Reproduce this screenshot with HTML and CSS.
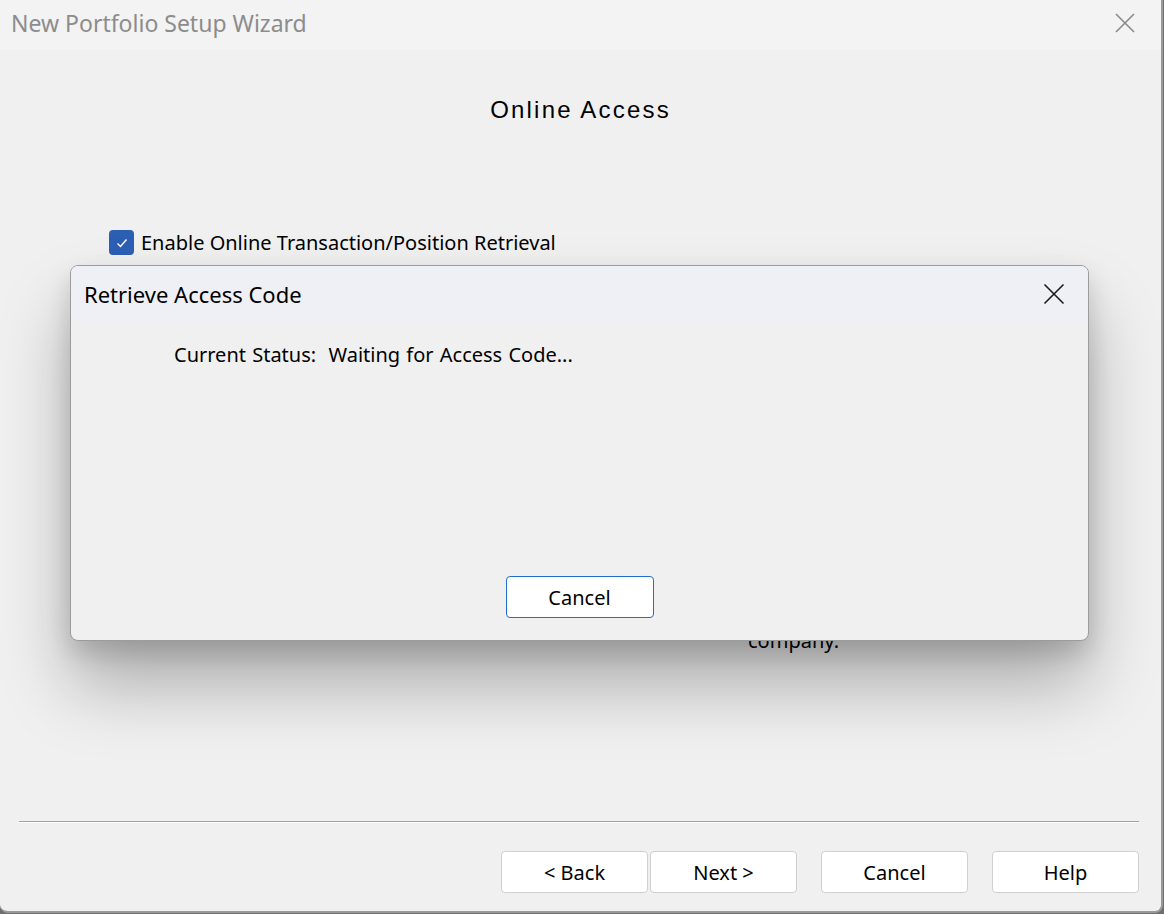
FILE: index.html
```html
<!DOCTYPE html>
<html lang="en">
<head>
    <meta charset="UTF-8">
    <title>New Portfolio Setup Wizard</title>
    <link rel="stylesheet" href="styles.css">
</head>
<body>
    <div class="window">
        <div class="titlebar">
            <span class="title">New Portfolio Setup Wizard</span>
            <svg class="close" width="22" height="22" viewBox="0 0 22 22">
                <path d="M2 2 L20 20 M20 2 L2 20" stroke="#8a8a8a" stroke-width="1.6" fill="none"/>
            </svg>
        </div>

        <div class="content">
            <h2 class="heading">Online Access</h2>
            <label class="check-row">
                <span class="checkbox">
                    <svg width="14" height="14" viewBox="0 0 14 14">
                        <path d="M2.5 7.5 L5.5 10.5 L11.5 3.5" stroke="#fff" stroke-width="1.4" fill="none"/>
                    </svg>
                </span>
                Enable Online Transaction/Position Retrieval
            </label>
            <p class="hidden-text">company.</p>
        </div>

        <div class="footer">
            <div class="separator"></div>
            <div class="buttons">
                <div class="pair">
                    <button>&lt; Back</button>
                    <button>Next &gt;</button>
                </div>
                <button>Cancel</button>
                <button>Help</button>
            </div>
        </div>

        <div class="dialog">
            <div class="dialog-title">
                <span>Retrieve Access Code</span>
                <svg width="22" height="22" viewBox="0 0 22 22">
                    <path d="M1.5 1.5 L20.5 20.5 M20.5 1.5 L1.5 20.5" stroke="#1a1a1a" stroke-width="1.6" fill="none"/>
                </svg>
            </div>
            <div class="dialog-body">
                <p class="status">Current Status:&nbsp; Waiting for Access Code...</p>
                <button class="primary">Cancel</button>
            </div>
        </div>
    </div>
</body>
</html>
```

FILE: styles.css
```css
body { margin: 0; background: #6e6e6e; font-family: "Noto Sans", "Open Sans", sans-serif; }

.window { position: relative; width: 1161px; height: 911px; background: #f0f0f0; border-right: 2px solid #9a9a9a; border-bottom: 2px solid #9a9a9a; border-radius: 0 0 8px 8px; display: flex; flex-direction: column; overflow: hidden; }

.titlebar { height: 50px; background: #f3f3f3; display: flex; align-items: center; justify-content: space-between; padding: 0 25px 4px 11px; box-sizing: border-box; }
.title { font-size: 23px; color: #8c8c8c; }

.content { flex: 1; position: relative; }
.heading { margin: 46px 0 0; text-align: center; font-family: "Liberation Sans", Arial, sans-serif; font-weight: normal; font-size: 24px; letter-spacing: 2.2px; color: #000; }
.check-row { display: flex; align-items: center; gap: 7px; margin: 105px 0 0 109px; font-size: 20px; color: #000; }
.checkbox { width: 25px; height: 25px; border-radius: 4px; background: #2c5fb4; display: flex; align-items: center; justify-content: center; }
.hidden-text { position: absolute; left: 748px; top: 577px; margin: 0; font-size: 20px; }

.footer { height: 90px; padding: 0 22px 0 19px; }
.separator { border-top: 1px solid #a0a0a0; border-bottom: 1px solid #fff; }
.buttons { display: flex; justify-content: flex-end; gap: 24px; margin-top: 28px; }
.pair { display: flex; gap: 2px; }
button { width: 147px; height: 42px; background: #fff; border: 1px solid #d0d0d0; border-radius: 4px; font-family: inherit; font-size: 20px; color: #000; }

.dialog { position: absolute; left: 70px; top: 265px; width: 1019px; height: 376px; box-sizing: border-box; background: #f0f0f0; border: 1px solid #9c9c9c; border-radius: 8px; box-shadow: 0 45px 70px rgba(0, 0, 0, 0.28), 0 12px 25px rgba(0, 0, 0, 0.15); overflow: hidden; display: flex; flex-direction: column; }
.dialog-title { height: 55px; background: #eff0f6; display: flex; align-items: center; justify-content: space-between; padding: 0 23px 0 13px; font-size: 22px; color: #000; }
.dialog-body { flex: 1; display: flex; flex-direction: column; align-items: center; }
.status { align-self: flex-start; margin: 20px 0 0 103px; font-size: 20px; word-spacing: 1px; }
.primary { margin-top: 208px; border-color: #1e6fd0; width: 148px; }
```
